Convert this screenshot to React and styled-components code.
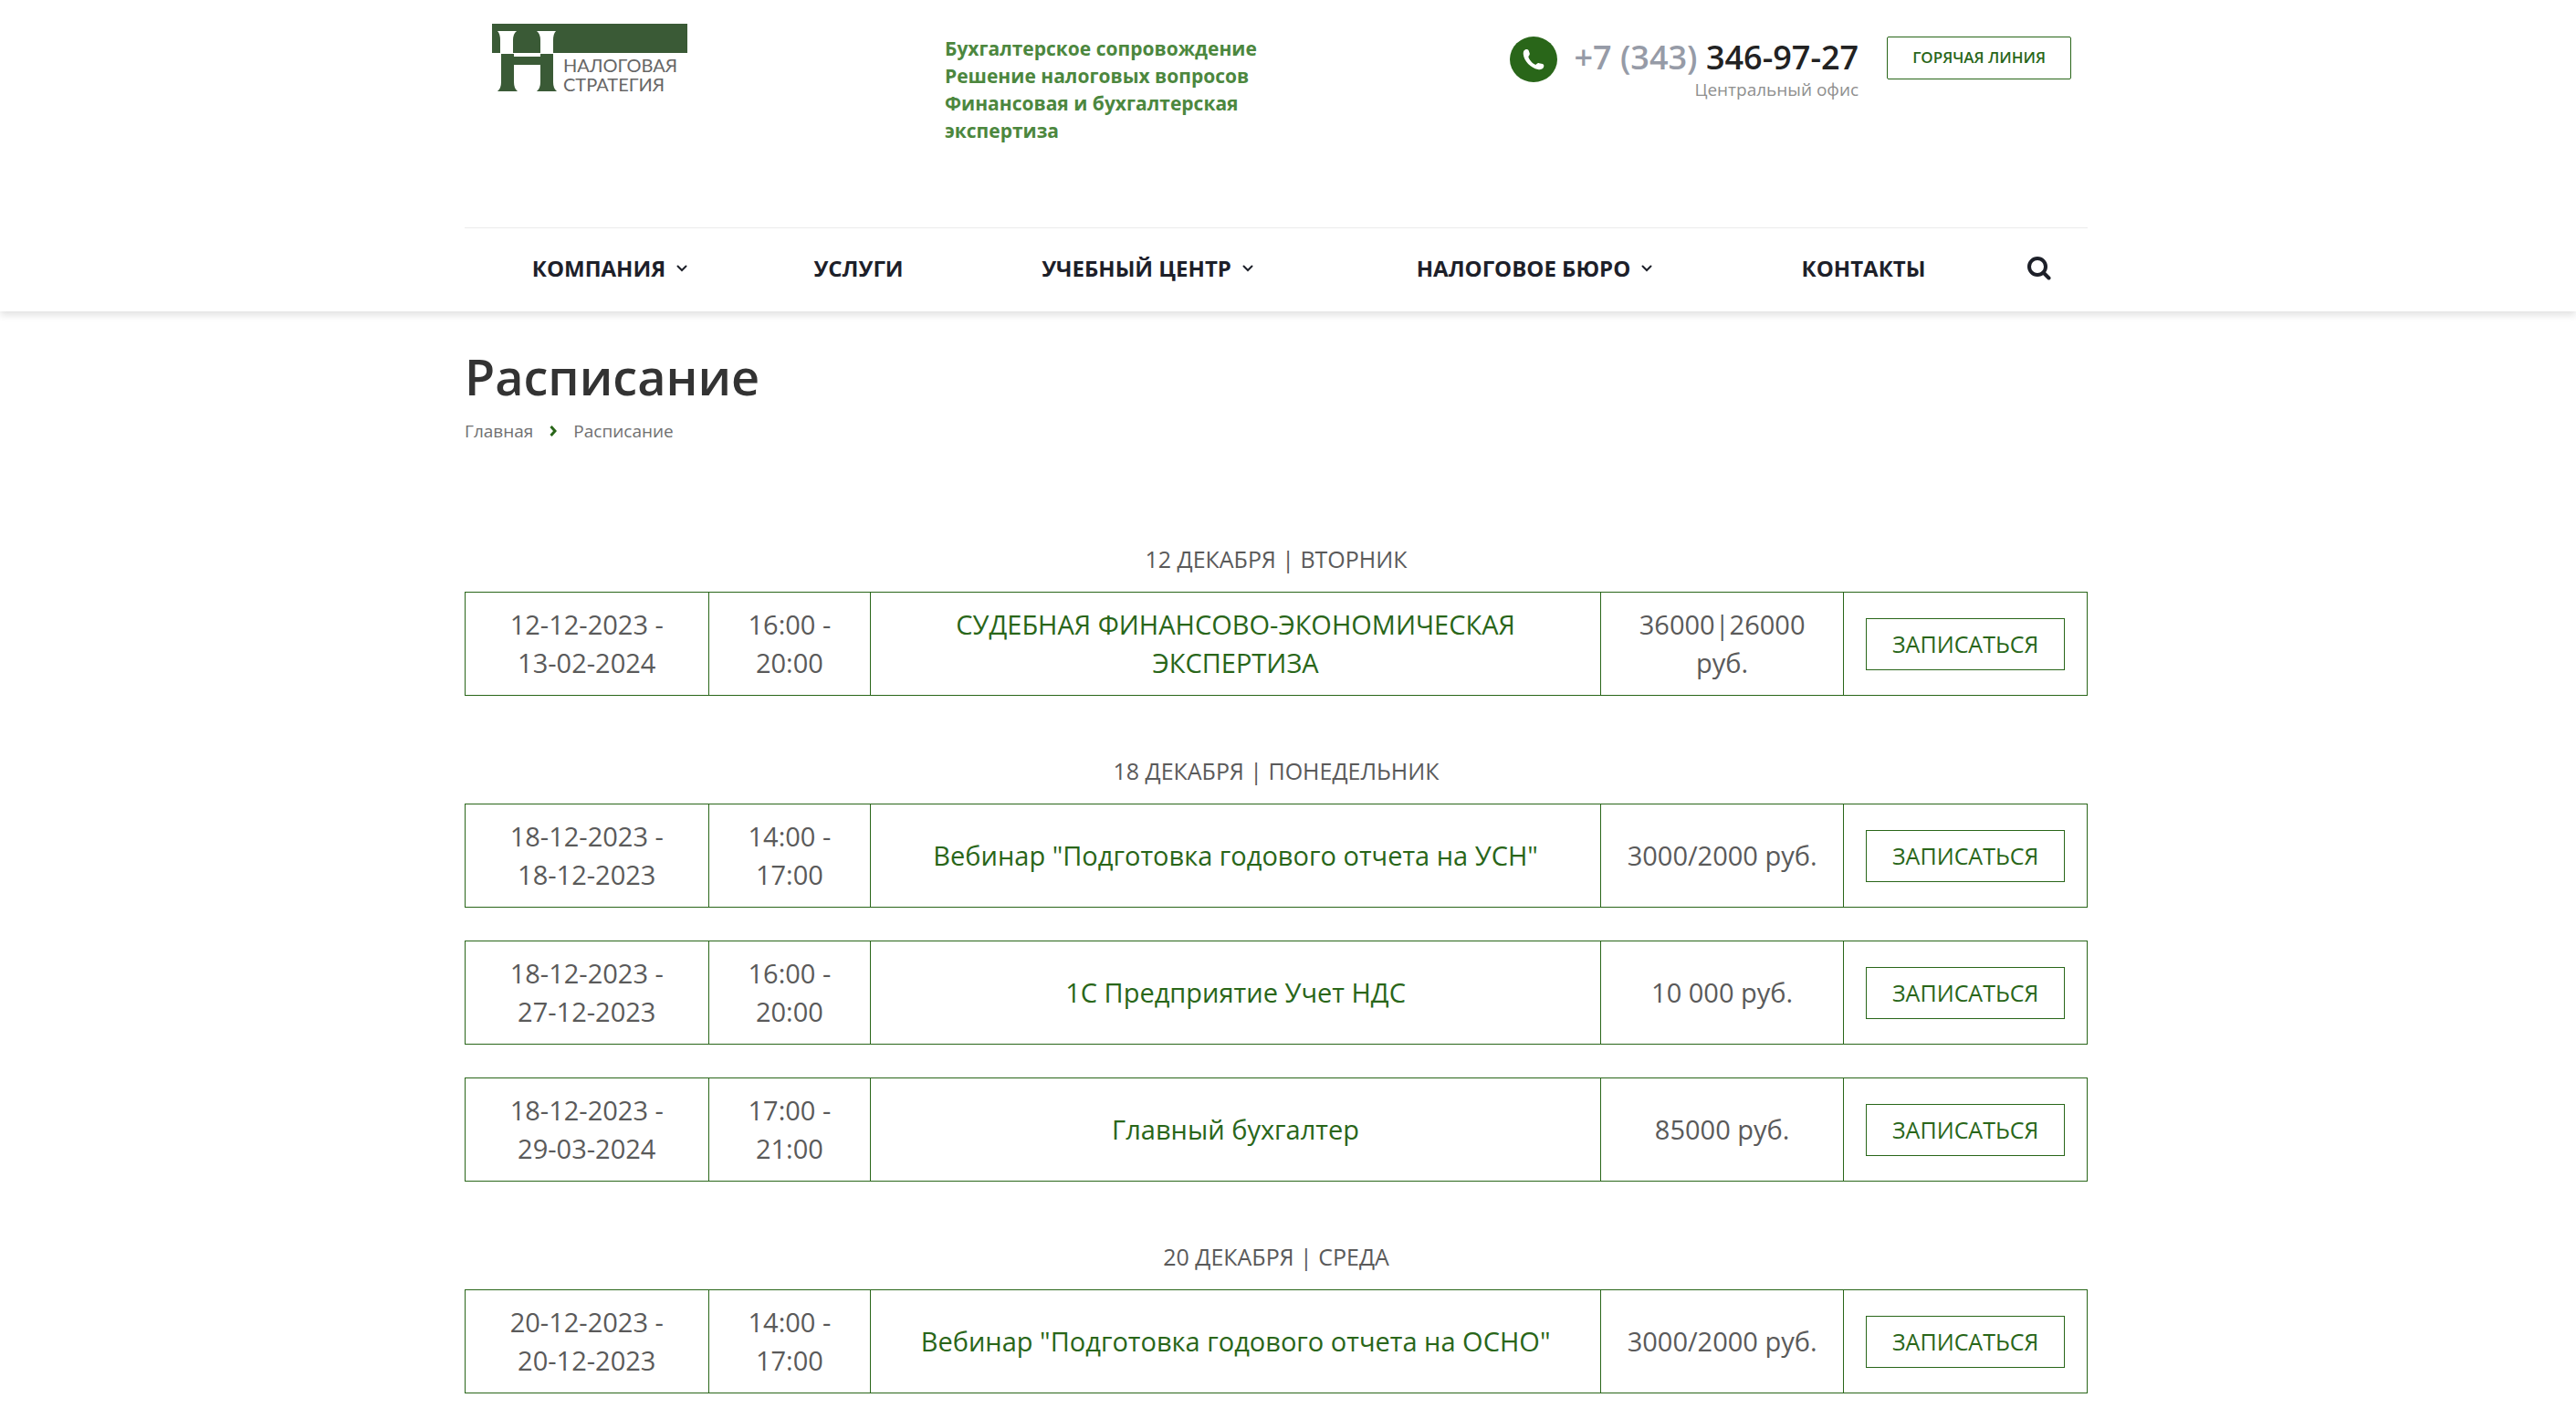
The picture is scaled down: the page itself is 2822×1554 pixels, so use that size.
import React from "react";
import styled, { createGlobalStyle } from "styled-components";

const green = "#296619";
const gray = "#5a5a5a";
const ink = "#1d2029";

const GlobalStyle = createGlobalStyle`
  * { box-sizing: border-box; }
  body {
    margin: 0;
    background: #fff;
    color: ${gray};
    font-family: "Open Sans", "Noto Sans", sans-serif;
  }
  a { color: inherit; text-decoration: none; }
`;

const Page = styled.div`
  overflow: hidden;
`;

const Header = styled.header`
  padding-right: 26px;
  background: #fff;
  box-shadow: 0 4px 8px rgba(0, 0, 0, 0.12);
`;

const Container = styled.div`
  width: 64%;
  min-width: 1400px;
  max-width: 1778px;
  margin: 0 auto;
`;

const TopBar = styled.div`
  display: grid;
  grid-template-columns: 526fr 610fr 642fr;
  align-items: start;
  min-height: 249px;
`;

const LogoLink = styled.a`
  display: block;
  padding: 24px 0 0 29px;
  svg { display: block; }
`;

const Slogan = styled.p`
  margin: 0;
  padding-top: 38px;
  max-width: 400px;
  color: #4c873e;
  font-size: 21px;
  line-height: 30px;
  font-weight: 700;
`;

const Contacts = styled.div`
  display: flex;
  justify-content: flex-end;
  align-items: flex-start;
  padding: 40px 18px 0 0;
`;

const PhoneBadge = styled.span`
  display: flex;
  align-items: center;
  justify-content: center;
  width: 52px;
  height: 50px;
  margin-right: 18px;
  border-radius: 50%;
  background: ${green};
`;

const PhoneBlock = styled.div`
  display: flex;
  flex-direction: column;
  align-items: flex-end;
  margin-right: 31px;
`;

const Phone = styled.a`
  color: #222;
  font-size: 36px;
  line-height: 46px;
  font-weight: 600;
  white-space: nowrap;
`;

const PhoneCode = styled.span`
  color: #969ba7;
`;

const Office = styled.span`
  color: #8f8f8f;
  font-size: 19px;
  line-height: 24px;
`;

const HotLine = styled.button`
  height: 47px;
  padding: 0 27px 3px;
  border: 1px solid ${green};
  border-radius: 2px;
  background: #fff;
  color: ${green};
  font-family: inherit;
  font-size: 17px;
  font-weight: 600;
  white-space: nowrap;
`;

const Nav = styled.nav`
  display: grid;
  grid-template-columns: 318fr 227fr 406fr 442fr 279fr 106fr;
  align-items: center;
  justify-items: center;
  height: 92px;
  padding-bottom: 4px;
  border-top: 1px solid #ececec;
`;

const NavLink = styled.a`
  display: flex;
  align-items: center;
  gap: 12px;
  color: ${ink};
  font-size: 24px;
  line-height: 32px;
  font-weight: 700;
  white-space: nowrap;
`;

const SearchButton = styled.button`
  display: flex;
  padding: 0;
  border: 0;
  background: none;
`;

const Main = styled.main`
  padding-right: 26px;
`;

const Title = styled.h1`
  margin: 0;
  padding-top: 35px;
  color: #333;
  font-size: 54px;
  line-height: 72px;
  font-weight: 600;
`;

const Crumbs = styled.div`
  display: flex;
  align-items: center;
  gap: 18px;
  padding-top: 10px;
  color: #707070;
  font-size: 19px;
  line-height: 28px;
`;

const Day = styled.section`
  margin-top: ${(p) => (p.$first ? "108px" : "64px")};
`;

const DayTitle = styled.h2`
  margin: 0 0 18px;
  font-size: 25px;
  line-height: 36px;
  font-weight: 400;
  text-align: center;
`;

const Schedule = styled.table`
  width: 100%;
  margin-bottom: 36px;
  border-collapse: collapse;
  table-layout: fixed;
`;

const Cell = styled.td`
  width: ${(p) => p.$width};
  height: 113px;
  padding: 0 24px;
  border: 1px solid ${green};
  color: ${(p) => (p.$link ? green : gray)};
  font-size: 29px;
  line-height: 42px;
  text-align: center;
  vertical-align: middle;
`;

const SignUp = styled.button`
  display: block;
  width: 100%;
  height: 57px;
  padding: 0;
  border: 1px solid ${green};
  background: #fff;
  color: ${green};
  font-family: inherit;
  font-size: 25px;
  line-height: 36px;
`;

const Logo = () => (
  <svg width="216" height="80" viewBox="0 0 216 80" role="img" aria-label="Налоговая стратегия">
    <rect x="1" y="2" width="214" height="32" fill="#3a5a36" />
    <path
      d="M7 10h21q-4 3-4 10v14h-14V20q0-7-3-10zM50 10h21q-3 3-3 10v14H54V20q0-7-4-10z"
      fill="#fff"
    />
    <path
      d="M11 35h14v3h29v-3h14v31q0 7 4 10H50q4-3 4-10V47H25v19q0 7 4 10H7q4-3 4-10z"
      fill="#3a5a36"
    />
    <g fill="#666" fontFamily="Lato, 'Open Sans', sans-serif" fontSize="20">
      <text x="79" y="55">НАЛОГОВАЯ</text>
      <text x="79" y="76">СТРАТЕГИЯ</text>
    </g>
  </svg>
);

const PhoneIcon = () => (
  <svg width="24" height="24" viewBox="0 0 24 24" aria-hidden="true">
    <path
      d="M1.500 2.500C2.500.8 5.500.3 6.500 2l1.200 3.200c.5 1.600-.7 2.500-1.400 3.800 1 3.800 4.300 7.500 8 9 1.400-1 2-2.300 3.700-1.800l4 .8c1.600.5 1.700 2.500.8 4-1 1.800-3.300 2.600-6 2C9 21.500 1.500 14 .8 6.500c-.1-1.700.1-3 .7-4z"
      fill="#fff"
    />
  </svg>
);

const ChevronDown = () => (
  <svg width="12" height="8" viewBox="0 0 12 8" aria-hidden="true">
    <path d="M1.500 1.500L6 6l4.500-4.500" fill="none" stroke={ink} strokeWidth="2" strokeLinecap="round" />
  </svg>
);

const ChevronRight = () => (
  <svg width="8" height="12" viewBox="0 0 8 12" aria-hidden="true">
    <path d="M1.500 1l4.500 5-4.500 5" fill="none" stroke={green} strokeWidth="3" />
  </svg>
);

const SearchIcon = () => (
  <svg width="26" height="26" viewBox="0 0 26 26" aria-hidden="true">
    <circle cx="11" cy="11" r="9" fill="none" stroke={ink} strokeWidth="4" />
    <path d="M17.500 17.500L23.500 23.500" stroke={ink} strokeWidth="4" strokeLinecap="round" />
  </svg>
);

const menu = [
  { label: "КОМПАНИЯ", sub: true },
  { label: "УСЛУГИ" },
  { label: "УЧЕБНЫЙ ЦЕНТР", sub: true },
  { label: "НАЛОГОВОЕ БЮРО", sub: true },
  { label: "КОНТАКТЫ" },
];

const days = [
  {
    title: "12 ДЕКАБРЯ | ВТОРНИК",
    events: [
      ["12-12-2023 -", "13-02-2024", "16:00 -", "20:00", "СУДЕБНАЯ ФИНАНСОВО-ЭКОНОМИЧЕСКАЯ ЭКСПЕРТИЗА", "36000|26000 руб."],
    ],
  },
  {
    title: "18 ДЕКАБРЯ | ПОНЕДЕЛЬНИК",
    events: [
      ["18-12-2023 -", "18-12-2023", "14:00 -", "17:00", 'Вебинар "Подготовка годового отчета на УСН"', "3000/2000 руб."],
      ["18-12-2023 -", "27-12-2023", "16:00 -", "20:00", "1С Предприятие Учет НДС", "10 000 руб."],
      ["18-12-2023 -", "29-03-2024", "17:00 -", "21:00", "Главный бухгалтер", "85000 руб."],
    ],
  },
  {
    title: "20 ДЕКАБРЯ | СРЕДА",
    events: [
      ["20-12-2023 -", "20-12-2023", "14:00 -", "17:00", 'Вебинар "Подготовка годового отчета на ОСНО"', "3000/2000 руб."],
    ],
  },
];

const EventRow = ({ event: [from, to, start, end, name, price] }) => (
  <Schedule>
    <tbody>
      <tr>
        <Cell $width="15%">{from}<br />{to}</Cell>
        <Cell $width="10%">{start}<br />{end}</Cell>
        <Cell $width="45%" $link><a href="#event">{name}</a></Cell>
        <Cell $width="15%">{price}</Cell>
        <Cell $width="15%"><SignUp type="button">ЗАПИСАТЬСЯ</SignUp></Cell>
      </tr>
    </tbody>
  </Schedule>
);

export default function App() {
  return (
    <Page>
      <GlobalStyle />
      <Header>
        <Container>
          <TopBar>
            <LogoLink href="#home"><Logo /></LogoLink>
            <Slogan>
              Бухгалтерское сопровождение<br />
              Решение налоговых вопросов<br />
              Финансовая и бухгалтерская<br />
              экспертиза
            </Slogan>
            <Contacts>
              <PhoneBadge><PhoneIcon /></PhoneBadge>
              <PhoneBlock>
                <Phone href="tel:+73433469727"><PhoneCode>+7 (343)</PhoneCode> 346-97-27</Phone>
                <Office>Центральный офис</Office>
              </PhoneBlock>
              <HotLine type="button">ГОРЯЧАЯ ЛИНИЯ</HotLine>
            </Contacts>
          </TopBar>
          <Nav>
            {menu.map((item) => (
              <NavLink key={item.label} href="#menu">
                {item.label}
                {item.sub && <ChevronDown />}
              </NavLink>
            ))}
            <SearchButton type="button" aria-label="Поиск"><SearchIcon /></SearchButton>
          </Nav>
        </Container>
      </Header>
      <Main>
        <Container>
          <Title>Расписание</Title>
          <Crumbs>
            <a href="#home">Главная</a>
            <ChevronRight />
            <span>Расписание</span>
          </Crumbs>
          {days.map((day, i) => (
            <Day key={day.title} $first={i === 0}>
              <DayTitle>{day.title}</DayTitle>
              {day.events.map((event) => (
                <EventRow key={event[1] + event[4]} event={event} />
              ))}
            </Day>
          ))}
        </Container>
      </Main>
    </Page>
  );
}
